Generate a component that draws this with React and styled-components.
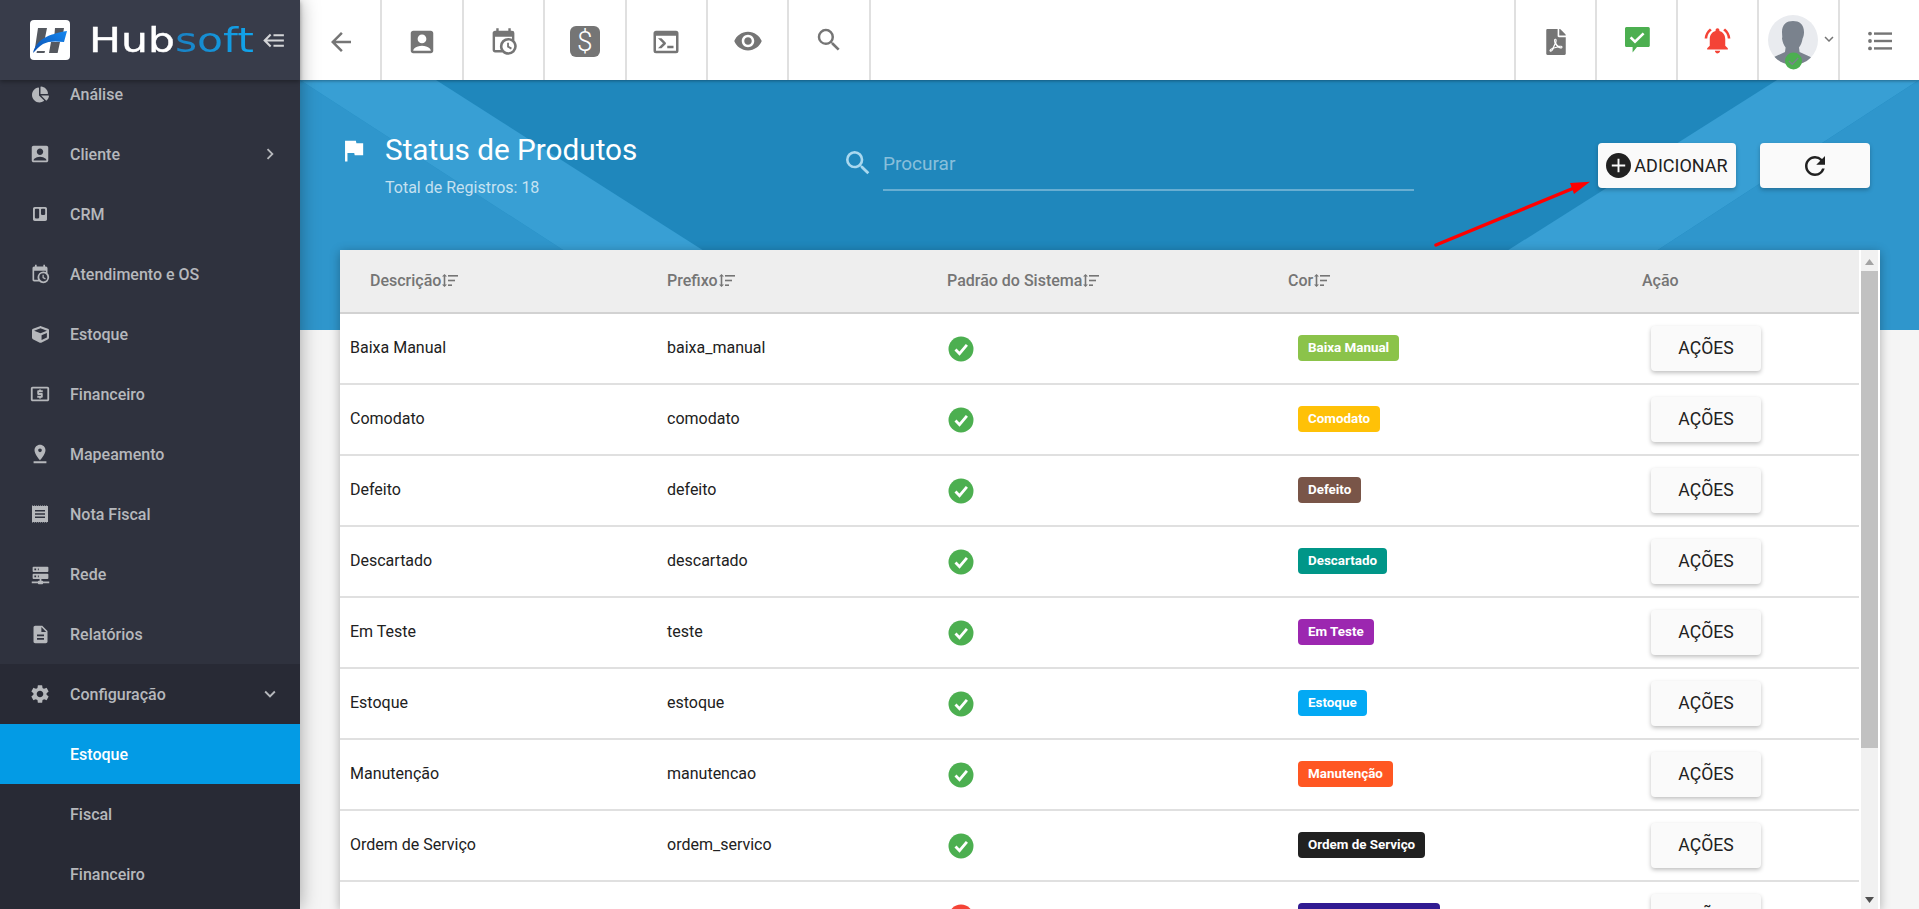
import React from "react";
import styled, { createGlobalStyle } from "styled-components";
import {
  MdAccountBox, MdArrowBack, MdVisibility, MdSearch, MdLocalAtm, MdPinDrop, MdDescription,
  MdSettings, MdChevronRight, MdKeyboardArrowDown, MdNotificationsActive, MdFlag, MdRefresh, MdAdd,
} from "react-icons/md";
import { FaChartPie, FaTrello, FaCube, FaFilePdf } from "react-icons/fa";

const Global = createGlobalStyle`
  html, body { margin: 0; padding: 0; height: 100%; overflow: hidden; background: #f5f5f5; }
  * { box-sizing: border-box; }
  body { font-family: Roboto, "Liberation Sans", sans-serif; }
`;

const P = {
  cal: "M15,13H16.5V15.82L18.94,17.23L18.19,18.53L15,16.69V13M19,8H5V19H9.67C9.24,18.09 9,17.07 9,16A7,7 0 0,1 16,9C17.07,9 18.09,9.24 19,9.67V8M5,21C3.89,21 3,20.1 3,19V5C3,3.89 3.89,3 5,3H6V1H8V3H16V1H18V3H19A2,2 0 0,1 21,5V11.1C22.24,12.36 23,14.09 23,16A7,7 0 0,1 16,23C14.09,23 12.36,22.24 11.1,21H5M16,11.15A4.85,4.85 0 0,0 11.15,16C11.15,18.68 13.32,20.85 16,20.85A4.85,4.85 0 0,0 20.85,16C20.85,13.32 18.68,11.15 16,11.15Z",
  server: "M13,19H14A1,1 0 0,1 15,20H22V22H15A1,1 0 0,1 14,23H10A1,1 0 0,1 9,22H2V20H9A1,1 0 0,1 10,19H11V17H4A1,1 0 0,1 3,16V12A1,1 0 0,1 4,11H20A1,1 0 0,1 21,12V16A1,1 0 0,1 20,17H13V19M4,3H20A1,1 0 0,1 21,4V8A1,1 0 0,1 20,9H4A1,1 0 0,1 3,8V4A1,1 0 0,1 4,3M9,7H10V5H9V7M9,15H10V13H9V15M5,5V7H7V5H5M5,13V15H7V13H5Z",
  console: "M20,19V7H4V19H20M20,3A2,2 0 0,1 22,5V19A2,2 0 0,1 20,21H4A2,2 0 0,1 2,19V5C2,3.89 2.9,3 4,3H20M13,17V15H18V17H13M9.58,13L5.57,9H8.4L11.7,12.3C12.09,12.69 12.09,13.33 11.7,13.72L8.42,17H5.59L9.58,13Z",
  burger: "M5,13L9,17L7.6,18.42L1.18,12L7.6,5.58L9,7L5,11H21V13H5M21,6V8H11V6H21M21,16V18H11V16H21Z",
};

const Glyph = ({ d, size = 24 }) => (
  <svg width={size} height={size} viewBox="0 0 24 24" fill="currentColor"><path d={d} /></svg>
);

const ReceiptIcon = ({ size = 18 }) => (
  <svg width={size} height={size} viewBox="0 0 18 18" fill="currentColor">
    <path fillRule="evenodd" d="M1 1h16v16H1zM4 5v1.5h10V5zM4 8.2v1.5h10V8.2zM4 11.4v1.5h10v-1.5z" />
    <path d="M1 0h1v.6H1zM3 0h1v.6H3zM5 0h1v.6H5zM7 0h1v.6H7zM9 0h1v.6H9zM11 0h1v.6h-1zM13 0h1v.6h-1zM15 0h1v.6h-1zM1 17.4h1v.6H1zM3 17.4h1v.6H3zM5 17.4h1v.6H5zM7 17.4h1v.6H7zM9 17.4h1v.6H9zM11 17.4h1v.6h-1zM13 17.4h1v.6h-1zM15 17.4h1v.6h-1z" />
  </svg>
);

const ChatCheck = () => (
  <svg width="26" height="26" viewBox="0 0 26 26">
    <path fill="#4caf50" d="M1 1.500C1 .8 1.600 0 2.400 0h22c.8 0 1.400.8 1.400 1.500v17c0 .8-.6 1.500-1.400 1.500H13l-4.400 5.600V20H2.400C1.600 20 1 19.300 1 18.500z" />
    <path fill="none" stroke="#fff" strokeWidth="2.600" d="M6.600 10.400l4.400 4.200L19.600 6.400" />
  </svg>
);

const ListIcon = () => (
  <svg width="24" height="20" viewBox="0 0 24 20" fill="#757575">
    <circle cx="2" cy="2.600" r="1.900" /><circle cx="2" cy="10" r="1.900" /><circle cx="2" cy="17.400" r="1.900" />
    <rect x="6" y="1.400" width="18" height="2.400" /><rect x="6" y="8.800" width="18" height="2.400" /><rect x="6" y="16.200" width="18" height="2.400" />
  </svg>
);

const StatusDisc = ({ off }) => (
  <svg width="26" height="26" viewBox="0 0 26 26">
    <circle cx="13" cy="13" r="12.500" fill={off ? "#f44336" : "#4caf50"} />
    {off
      ? <path d="M8.500 8.500l9 9M17.500 8.500l-9 9" stroke="#fff" strokeWidth="2.800" fill="none" />
      : <path d="M7.500 13.500l4 4.200 7.400-8.800" stroke="#fff" strokeWidth="2.800" fill="none" />}
  </svg>
);

const AvatarArt = () => (
  <svg width="50" height="55" viewBox="0 0 50 55">
    <defs><clipPath id="av"><circle cx="25" cy="25" r="25" /></clipPath></defs>
    <circle cx="25" cy="25" r="25" fill="#e9ebef" />
    <g clipPath="url(#av)" fill="#7a828d">
      <path d="M14 17c0-8 5-11 11-11s11 3 11 11c0 3-.6 5-1.400 6.400-.6 4-2 7-3.600 9l.6 4.600 11 5 3 9H3l3-9 11-5 .6-4.600c-1.600-2-3-5-3.600-9C14.600 22 14 20 14 17z" />
    </g>
    <circle cx="25.500" cy="46" r="8.500" fill="#4caf50" />
    <path d="M21 46l3.200 3.200 6-6.200" fill="none" stroke="#7a828d" strokeWidth="1.400" />
  </svg>
);

const LogoMark = () => (
  <svg width="40" height="40" viewBox="0 0 40 40">
    <defs>
      <linearGradient id="lg" x1="0" y1="1" x2="1" y2="0">
        <stop offset="0" stopColor="#0a4fb0" /><stop offset="1" stopColor="#1688f0" />
      </linearGradient>
    </defs>
    <rect width="40" height="40" rx="4" fill="#fff" />
    <path fill="#54585f" d="M8 8h9l-2 10-10 10zM25 8h9l-2 12h-8zM21 22h9l-2.400 11h-8.600zM7 31h8l-.5 2H6.500z" />
    <path fill="url(#lg)" d="M3 33C6 20 18 14 37 11l-3 11c-8-1-16-1-21 2-4 2.500-7 6-10 9z" />
  </svg>
);

const SortSvg = styled.svg`
  margin-left: 1px;
  flex: none;
`;

const SortIcon = () => (
  <SortSvg width="16" height="13" viewBox="0 0 16 13" fill="#757575">
    <path d="M2.500 0L5 2.600H3.300v7.800H5L2.500 13 0 10.400h1.700V2.600H0z" />
    <rect x="6" y="1" width="10" height="1.600" /><rect x="6" y="5.700" width="7" height="1.600" /><rect x="6" y="10.400" width="4" height="1.600" />
  </SortSvg>
);

const Shell = styled.div`
  display: flex;
  height: 100vh;
  overflow: hidden;
`;

const Sidebar = styled.aside`
  width: 300px;
  flex: none;
  display: flex;
  flex-direction: column;
  background: #2f323e;
  box-shadow: 0 0 18px rgba(0, 0, 0, 0.35);
  position: relative;
  z-index: 3;
`;

const Brand = styled.div`
  height: 80px;
  flex: none;
  display: flex;
  align-items: center;
  padding: 0 13px 0 30px;
  background: #383c4a;
  box-shadow: 0 2px 4px rgba(0, 0, 0, 0.3);
  position: relative;
  z-index: 1;
  color: #d4d5d8;
`;

const LogoText = styled.span`
  display: inline-block;
  margin-left: 19px;
  font-family: "DejaVu Sans", sans-serif;
  font-size: 34px;
  line-height: 40px;
  font-weight: 400;
  color: #fff;
  -webkit-text-stroke: 0.4px currentColor;
  transform: scaleX(1.25);
  transform-origin: left center;
  span {
    background: linear-gradient(90deg, #1a80c2, #10a6ee);
    -webkit-background-clip: text;
    background-clip: text;
    color: transparent;
    -webkit-text-stroke: 0;
  }
`;

const Toggle = styled.span`
  margin-left: auto;
  display: flex;
`;

const Menu = styled.nav`
  flex: 1;
  overflow: hidden;
`;

const MenuList = styled.div`
  margin-top: -16px;
`;

const MenuRow = styled.div`
  height: 60px;
  display: flex;
  align-items: center;
  font-size: 16px;
  font-weight: 500;
  color: ${(p) => (p.$active ? "#fff" : "#b6b8bc")};
  background: ${(p) => (p.$active ? "#039be5" : p.$open ? "#282a35" : "transparent")};
`;

const MenuIcon = styled.span`
  width: 70px;
  flex: none;
  display: flex;
  justify-content: center;
  padding-left: 10px;
  & > svg { display: block; }
`;

const MenuCaret = styled.span`
  margin-left: auto;
  margin-right: 19px;
  display: flex;
`;

const SubMenu = styled.div`
  background: #282a35;
  padding-bottom: 10px;
`;

const Main = styled.main`
  flex: 1;
  min-width: 0;
  display: flex;
  flex-direction: column;
  background: #f5f5f5;
`;

const TopBar = styled.header`
  height: 80px;
  flex: none;
  display: flex;
  justify-content: space-between;
  background: #fff;
  color: #757575;
  box-shadow: 0 1px 3px rgba(0, 0, 0, 0.35);
  position: relative;
  z-index: 2;
`;

const TopGroup = styled.div`
  display: flex;
  padding-left: ${(p) => p.$inset || 0}px;
`;

const TopCell = styled.div`
  width: 81.4px;
  height: 80px;
  display: flex;
  align-items: center;
  justify-content: center;
  padding-top: ${(p) => p.$drop ?? 3}px;
  border-right: 2px solid #e0e0e0;
`;

const RightCell = styled(TopCell)`
  border-right: none;
  border-left: 2px solid #e0e0e0;
  width: 81px;
`;

const AvatarCell = styled(RightCell)`
  padding: 15px 0 0 9px;
  justify-content: flex-start;
  align-items: flex-start;
  color: #757575;
`;

const AvatarCaret = styled.span`
  margin-top: 15px;
  margin-left: 2px;
  display: flex;
`;

const DollarTile = styled.span`
  width: 30px;
  height: 31px;
  border-radius: 6px;
  background: #757575;
  color: #fff;
  font-size: 28px;
  font-weight: 300;
  line-height: 31px;
  text-align: center;
`;

const Hero = styled.section`
  flex: 1;
  min-height: 0;
  position: relative;
  padding: 0 39px 0 40px;
  display: flex;
  flex-direction: column;
`;

const BandArt = styled.svg`
  position: absolute;
  left: 0;
  top: 0;
  display: block;
`;

const PageHead = styled.div`
  height: 170px;
  flex: none;
  position: relative;
  display: flex;
  align-items: flex-start;
  padding: 52px 10px 0 6px;
`;

const TitleBlock = styled.div`
  width: 500px;
  flex: none;
  display: flex;
  color: #fff;
`;

const FlagBox = styled.span`
  width: 39px;
  flex: none;
  margin-left: -7px;
  margin-right: 7px;
  display: flex;
  padding-top: 4px;
`;

const Title = styled.h1`
  margin: 0;
  font-size: 29.7px;
  font-weight: 400;
  line-height: 36px;
`;

const Subtitle = styled.div`
  margin-top: 10px;
  font-size: 16px;
  line-height: 20px;
  color: rgba(255, 255, 255, 0.72);
`;

const SearchBox = styled.label`
  width: 568px;
  flex: none;
  display: flex;
  align-items: flex-start;
  margin-top: 15px;
  color: #a9d8ef;
`;

const SearchIcon = styled.span`
  width: 37px;
  flex: none;
  display: flex;
  margin-left: -4px;
  margin-right: 4px;
`;

const SearchInput = styled.input`
  flex: 1;
  min-width: 0;
  height: 44px;
  background: transparent;
  border: none;
  border-bottom: 2px solid rgba(255, 255, 255, 0.33);
  outline: none;
  padding: 0 0 9px;
  font: 400 19px Roboto, sans-serif;
  color: #fff;
  &::placeholder { color: rgba(255, 255, 255, 0.48); opacity: 1; }
`;

const HeadActions = styled.div`
  margin-left: auto;
  margin-top: 11px;
  display: flex;
  gap: 24px;
`;

const RaisedButton = styled.button`
  height: 45px;
  width: ${(p) => p.$w}px;
  border: none;
  border-radius: 4px;
  background: #fafafa;
  color: #212121;
  font: 400 ${(p) => p.$fs || 16}px Roboto, sans-serif;
  display: flex;
  align-items: center;
  justify-content: center;
  padding: 0;
  box-shadow: 0 2px 4px rgba(0, 0, 0, 0.25);
`;

const PlusDisc = styled.span`
  width: 25px;
  height: 25px;
  border-radius: 50%;
  background: #212121;
  color: #fafafa;
  display: flex;
  align-items: center;
  justify-content: center;
  margin-right: 3px;
`;

const RedArrow = styled.svg`
  position: absolute;
  left: 1120px;
  top: 90px;
  z-index: 2;
`;

const Card = styled.div`
  flex: 1;
  min-height: 0;
  display: flex;
  background: #fff;
  overflow: hidden;
  position: relative;
  box-shadow: 0 2px 10px rgba(0, 0, 0, 0.3);
`;

const TableArea = styled.div`
  width: 1519px;
  flex: none;
`;

const HeaderRow = styled.div`
  display: grid;
  grid-template-columns: 317px 280px 351px 354px 1fr;
  height: 64px;
  background: #eee;
  border-bottom: 2px solid #d2d2d2;
  align-items: center;
  font-size: 16px;
  font-weight: 500;
  color: #757575;
`;

const HeaderCell = styled.div`
  display: flex;
  align-items: center;
  padding-left: ${(p) => p.$pad}px;
  padding-bottom: 2px;
`;

const Row = styled.div`
  display: grid;
  grid-template-columns: 317px 280px 351px 354px 1fr;
  height: 71px;
  border-bottom: 2px solid #e0e0e0;
  align-items: center;
  font-size: 16px;
  color: #212121;
`;

const TextCell = styled.div`
  padding-left: 10px;
  padding-bottom: 2px;
`;

const IconCell = styled.div`
  padding-left: 11px;
  display: flex;
  padding-top: 1px;
`;

const BadgeCell = styled.div`
  padding-left: 10px;
  display: flex;
  padding-bottom: 2px;
`;

const Badge = styled.span`
  height: 26px;
  min-width: ${(p) => p.$min || 0}px;
  padding: 0 10px;
  border-radius: 4px;
  background: ${(p) => p.$bg};
  color: #fff;
  font-size: 13.4px;
  font-weight: 700;
  line-height: 26px;
`;

const ActionCell = styled.div`
  padding-left: 9px;
  padding-bottom: 1px;
`;

const ScrollTrack = styled.div`
  width: 17px;
  flex: none;
  margin: 0 2px;
  background: #f1f1f1;
  display: flex;
  flex-direction: column;
  color: #a3a3a3;
`;

const ScrollUp = styled.div`
  height: 21px;
  flex: none;
  display: flex;
  align-items: center;
  justify-content: center;
  padding-top: 2px;
`;

const ScrollThumb = styled.div`
  height: 477px;
  flex: none;
  background: #c1c1c1;
`;

const ScrollDown = styled(ScrollUp)`
  margin-top: auto;
  height: 19px;
  color: #505050;
  padding-top: 0;
`;

const Tri = ({ down }) => (
  <svg width="9" height="6" viewBox="0 0 9 6" fill="currentColor">
    <path d={down ? "M0 0h9L4.500 6z" : "M4.500 0L9 6H0z"} />
  </svg>
);

const menu = [
  ["Análise", <FaChartPie size={17} />],
  ["Cliente", <MdAccountBox size={22} />, "right"],
  ["CRM", <FaTrello size={16} />],
  ["Atendimento e OS", <Glyph d={P.cal} size={20} />],
  ["Estoque", <FaCube size={17} />],
  ["Financeiro", <MdLocalAtm size={22} />],
  ["Mapeamento", <MdPinDrop size={22} />],
  ["Nota Fiscal", <ReceiptIcon size={18} />],
  ["Rede", <Glyph d={P.server} size={21} />],
  ["Relatórios", <MdDescription size={21} />],
];

const rows = [
  { d: "Baixa Manual", p: "baixa_manual", c: "#8bc34a" },
  { d: "Comodato", p: "comodato", c: "#ffc107" },
  { d: "Defeito", p: "defeito", c: "#795548" },
  { d: "Descartado", p: "descartado", c: "#009688" },
  { d: "Em Teste", p: "teste", c: "#9c27b0" },
  { d: "Estoque", p: "estoque", c: "#03a9f4" },
  { d: "Manutenção", p: "manutencao", c: "#ff5722" },
  { d: "Ordem de Serviço", p: "ordem_servico", c: "#212121" },
  { d: "", p: "", c: "#311b92", min: 142, off: true },
];

const headers = [["Descrição", 30, 1], ["Prefixo", 10, 1], ["Padrão do Sistema", 10, 1], ["Cor", 0, 1], ["Ação", 0, 0]];

export default function App() {
  return (
    <>
      <Global />
      <Shell>
        <Sidebar>
          <Brand>
            <LogoMark />
            <LogoText>Hub<span>soft</span></LogoText>
            <Toggle><Glyph d={P.burger} size={25} /></Toggle>
          </Brand>
          <Menu>
            <MenuList>
              {menu.map(([label, icon, caret]) => (
                <MenuRow key={label}>
                  <MenuIcon>{icon}</MenuIcon>
                  {label}
                  {caret && <MenuCaret><MdChevronRight size={22} /></MenuCaret>}
                </MenuRow>
              ))}
              <MenuRow $open>
                <MenuIcon><MdSettings size={22} /></MenuIcon>
                Configuração
                <MenuCaret><MdKeyboardArrowDown size={22} /></MenuCaret>
              </MenuRow>
              <SubMenu>
                <MenuRow $active><MenuIcon />Estoque</MenuRow>
                <MenuRow><MenuIcon />Fiscal</MenuRow>
                <MenuRow><MenuIcon />Financeiro</MenuRow>
              </SubMenu>
            </MenuList>
          </Menu>
        </Sidebar>
        <Main>
          <TopBar>
            <TopGroup $inset={1}>
              <TopCell><MdArrowBack size={30} /></TopCell>
              <TopCell><MdAccountBox size={30} /></TopCell>
              <TopCell><Glyph d={P.cal} size={29} /></TopCell>
              <TopCell><DollarTile>$</DollarTile></TopCell>
              <TopCell><Glyph d={P.console} size={30} /></TopCell>
              <TopCell $drop={1}><MdVisibility size={30} /></TopCell>
              <TopCell $drop={0}><MdSearch size={30} /></TopCell>
            </TopGroup>
            <TopGroup>
              <RightCell><FaFilePdf size={26} /></RightCell>
              <RightCell $drop={0}><ChatCheck /></RightCell>
              <RightCell $drop={1}><MdNotificationsActive size={31} color="#f44336" /></RightCell>
              <AvatarCell>
                <AvatarArt />
                <AvatarCaret><MdKeyboardArrowDown size={18} /></AvatarCaret>
              </AvatarCell>
              <RightCell $drop={1}><ListIcon /></RightCell>
            </TopGroup>
          </TopBar>
          <Hero>
            <BandArt width="1619" height="250" viewBox="0 0 1619 250">
              <rect width="1619" height="250" fill="#1f87bc" />
              <path fill="#2f96cc" d="M0 0L387 250H0z" />
              <path fill="#389fd4" d="M0 0H136L528 250H387z" />
              <path fill="#389fd4" d="M1477 0H1619L1235 250H1082z" />
              <path fill="#2f96cc" d="M1619 0V250H1235z" />
            </BandArt>
            <PageHead>
              <TitleBlock>
                <FlagBox><MdFlag size={29} /></FlagBox>
                <div>
                  <Title>Status de Produtos</Title>
                  <Subtitle>Total de Registros: 18</Subtitle>
                </div>
              </TitleBlock>
              <SearchBox>
                <SearchIcon><MdSearch size={32} /></SearchIcon>
                <SearchInput placeholder="Procurar" />
              </SearchBox>
              <HeadActions>
                <RaisedButton $w={138} $fs={18}><PlusDisc><MdAdd size={23} /></PlusDisc>ADICIONAR</RaisedButton>
                <RaisedButton $w={110}><MdRefresh size={30} /></RaisedButton>
              </HeadActions>
            </PageHead>
            <RedArrow width="180" height="90" viewBox="1420 170 180 90">
              <path d="M1436 245L1574 188" stroke="#f00" strokeWidth="3.500" strokeLinecap="round" />
              <path d="M1590 181.700L1570 183L1574 194z" fill="#f00" />
            </RedArrow>
            <Card>
              <TableArea>
                <HeaderRow>
                  {headers.map(([h, pad, sort]) => (
                    <HeaderCell key={h} $pad={pad}>{h}{sort ? <SortIcon /> : null}</HeaderCell>
                  ))}
                </HeaderRow>
                {rows.map((r, i) => (
                  <Row key={i}>
                    <TextCell>{r.d}</TextCell>
                    <TextCell>{r.p}</TextCell>
                    <IconCell><StatusDisc off={r.off} /></IconCell>
                    <BadgeCell><Badge $bg={r.c} $min={r.min}>{r.d}</Badge></BadgeCell>
                    <ActionCell><RaisedButton $w={110} $fs={17.6}>AÇÕES</RaisedButton></ActionCell>
                  </Row>
                ))}
              </TableArea>
              <ScrollTrack>
                <ScrollUp><Tri /></ScrollUp>
                <ScrollThumb />
                <ScrollDown><Tri down /></ScrollDown>
              </ScrollTrack>
            </Card>
          </Hero>
        </Main>
      </Shell>
    </>
  );
}
